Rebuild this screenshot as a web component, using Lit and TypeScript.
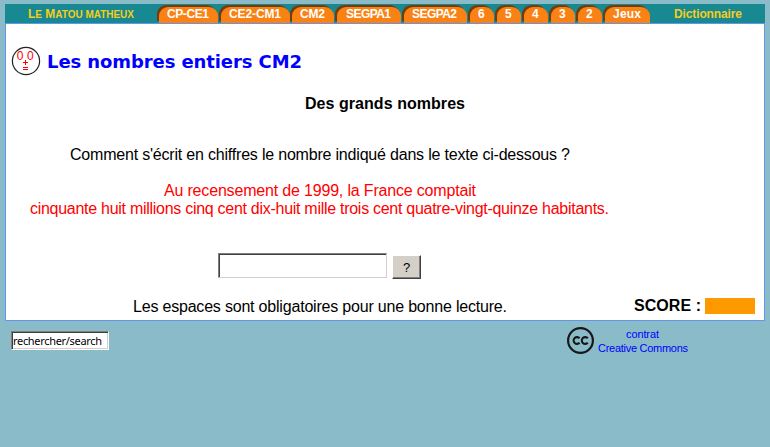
import { LitElement, html, css, svg } from "lit";
import { customElement } from "lit/decorators.js";
import { styleMap } from "lit/directives/style-map.js";

interface Tab { label: string; width: number; gap: number; text: number; }

const TABS: Tab[] = [
  { label: "CP-CE1", width: 59, gap: 3, text: 42 },
  { label: "CE2-CM1", width: 69, gap: 2, text: 52 },
  { label: "CM2", width: 42, gap: 3, text: 25 },
  { label: "SEGPA1", width: 64, gap: 3, text: 45 },
  { label: "SEGPA2", width: 63, gap: 3, text: 45 },
  { label: "6", width: 24, gap: 3, text: 7 },
  { label: "5", width: 24, gap: 3, text: 7 },
  { label: "4", width: 24, gap: 3, text: 7 },
  { label: "3", width: 24, gap: 3, text: 7 },
  { label: "2", width: 24, gap: 3, text: 7 },
  { label: "Jeux", width: 45, gap: 0, text: 28 },
];

/* One line of text fitted to a given width. */
const line = (text: unknown, width: number, cls = "") => html`
  <svg class="line ${cls}" width=${width} height="18" viewBox="0 0 ${width} 18">
    ${svg`<text x="0" y="14" textLength=${width} lengthAdjust="spacing">${text}</text>`}
  </svg>`;

const brand = svg`L<tspan class="small">e</tspan> M<tspan class="small">atou matheux</tspan>`;

@customElement("app-root")
export class AppRoot extends LitElement {
  static styles = css`
    :host { display: block; box-sizing: border-box; height: 447px; padding: 4px 5px 0; overflow: hidden;
      background: #8abbc9; font-family: "Liberation Sans", Arial, sans-serif; font-size: 16px; color: #000; }
    * { box-sizing: border-box; }
    .line { display: block; overflow: visible; fill: currentColor; }
    .bar { display: flex; height: 19px; background: #188891; font-size: 12px; font-weight: bold; color: #f5cd1c; }
    .brand { width: 154px; padding-left: 23px; }
    .small { font-size: 10px; text-transform: uppercase; }
    .tab { display: flex; justify-content: center; height: 16px; margin-top: 3px; padding-right: 2px; background: #fa8214;
      color: #fff; border-radius: 9px 9px 0 0; box-shadow: -2px -2px 0 #743c0a; }
    .tab .line { margin-top: -3px; flex: none; }
    .dict { margin-left: 24px; }
    .sheet { height: 298px; border: 1px solid #6495ed; background: #fff; }
    .heading { display: flex; height: 67px; padding: 22px 0 0 5px; }
    .face { display: block; width: 30px; height: 30px; }
    .title { margin: 8px 0 0 6px; font: bold 18px "DejaVu Sans", Verdana, sans-serif; color: #00f; }
    .subtitle { margin: 4px 0 0 299px; font-weight: bold; }
    .question { margin: 33px 0 0 64px; }
    .story { margin: 18px 0 0 24px; color: #f00; }
    .story .first { margin-left: 134px; }
    .answer { display: flex; margin: 35px 0 0 212px; gap: 5px; }
    .field { width: 169px; height: 25px; border: 1px solid; border-color: #808080 #d4d0c8 #d4d0c8 #808080;
      box-shadow: inset 1px 1px 0 #404040; background: #fff; }
    .ask { display: flex; align-items: center; justify-content: center; width: 29px; height: 24px; margin-top: 2px;
      background: #d4d0c8; border: 1px solid; border-color: #fff #404040 #404040 #fff;
      box-shadow: inset -1px -1px 0 #808080; font-size: 13px; }
    .bottom { display: flex; height: 18px; margin: 19px 0 0 127px; }
    .score { display: flex; margin: -1px 0 0 127px; font-weight: bold; }
    .points { width: 50px; height: 16px; margin: 1px 0 0 4px; background: #ff9900; }
    .footer { display: flex; padding: 5px 0 0 6px; }
    .search { width: 98px; height: 19px; margin-top: 5px; padding-left: 1px; border: 1px solid;
      border-color: #808080 #fff #fff #808080; background: #fff;
      box-shadow: inset 1px 1px 0 #404040, inset -1px -1px 0 #d4d0c8; font: 11px "Noto Sans", Tahoma, sans-serif; }
    .search .line { margin-top: -1px; }
    .cc { width: 28px; height: 28px; margin: 1px 0 0 458px; }
    .licence { margin: -2px 0 0 3px; font-size: 11px; color: #00f; }
    .licence .line { margin-bottom: -4px; }
    .licence .centred { margin-left: 28px; }
    .digits { font: 12px "Liberation Sans", sans-serif; fill: #f00; text-anchor: middle; }
  `;

  render() {
    return html`
      <nav class="bar">
        <div class="brand">${line(brand, 106)}</div>
        ${TABS.map((t) => html`
          <div class="tab" style=${styleMap({ width: `${t.width}px`, marginRight: `${t.gap}px` })}>
            ${line(t.label, t.text)}
          </div>`)}
        <div class="dict">${line("Dictionnaire", 68)}</div>
      </nav>
      <main class="sheet">
        <div class="heading">
          <svg class="face" viewBox="0 0 30 30">
            <circle cx="15" cy="15" r="13.6" fill="#fff" stroke="#222" stroke-width="1.2" />
            <g class="digits">
              <text x="9.2" y="14">0</text>
              <text x="19.3" y="14">0</text>
            </g>
            <path d="M12 16.5h5M14.5 14v5M12 21.5h5M12 23.5h5" stroke="#f00" fill="none" />
          </svg>
          <div class="title">${line("Les nombres entiers CM2", 255)}</div>
        </div>
        <div class="subtitle">${line("Des grands nombres", 160)}</div>
        <div class="question">${line("Comment s'écrit en chiffres le nombre indiqué dans le texte ci-dessous ?", 500)}</div>
        <div class="story">
          ${line("Au recensement de 1999, la France comptait", 312, "first")}
          ${line("cinquante huit millions cinq cent dix-huit mille trois cent quatre-vingt-quinze habitants.", 579)}
        </div>
        <div class="answer">
          <div class="field"></div>
          <div class="ask">?</div>
        </div>
        <div class="bottom">
          ${line("Les espaces sont obligatoires pour une bonne lecture.", 374)}
          <div class="score">${line("SCORE :", 67)}<div class="points"></div></div>
        </div>
      </main>
      <footer class="footer">
        <div class="search">${line("rechercher/search", 89)}</div>
        <svg class="cc" viewBox="0 0 28 28">
          <circle cx="13.5" cy="13.5" r="12.4" fill="none" stroke="#181818" stroke-width="2.2" />
          <path d="M12.6 11.3A3.4 3.4 0 1 0 12.6 15.7M20.8 11.3A3.4 3.4 0 1 0 20.8 15.7" fill="none" stroke="#181818" stroke-width="2.1" />
        </svg>
        <div class="licence">
          ${line("contrat", 33, "centred")}
          ${line("Creative Commons", 90)}
        </div>
      </footer>
    `;
  }
}
